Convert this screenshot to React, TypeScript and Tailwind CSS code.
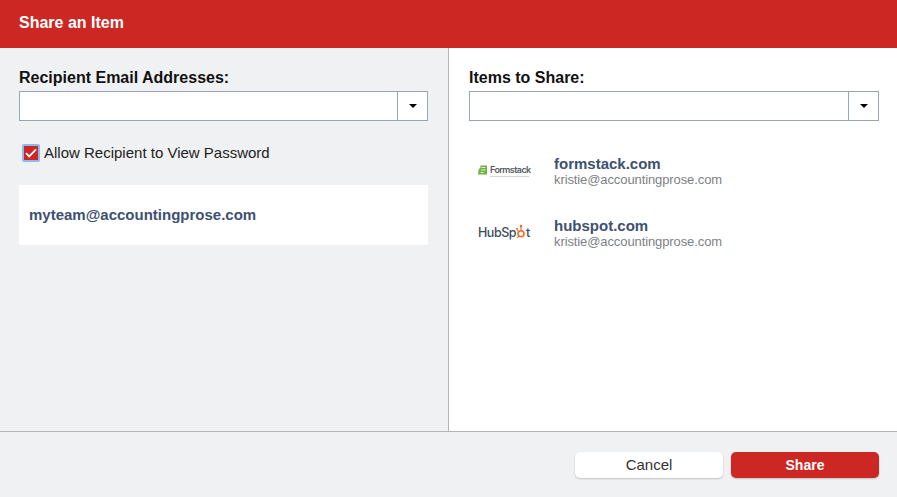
const sans = "font-['Liberation_Sans',Arial,sans-serif]";

function ComboBox() {
  return (
    <div className="flex h-[30px] border border-[#9aa5b4] bg-white">
      <div className="flex-1" />
      <div className="flex w-[30px] items-center justify-center border-l border-[#9aa5b4]">
        <span className="h-0 w-0 border-x-[4px] border-t-[4px] border-x-transparent border-t-black" />
      </div>
    </div>
  );
}

function FormstackLogo() {
  return (
    <div className="flex w-[52px] flex-col">
      <div className="flex items-center gap-[3px]">
        <svg width="9" height="10" viewBox="0 0 9 10" className="shrink-0">
          <path d="M2.6 0.4H9V9.6H0L0.8 3.4H2.2z" fill="#6cb33f" />
          <path d="M3.4 2h4v1h-4z M3 4.6h4.4v1H3z M2.6 7h3v1h-3z" fill="#e4f2d8" />
        </svg>
        <span className="font-['Inter',sans-serif] text-[9px] leading-[10px] font-semibold tracking-[-0.6px] whitespace-nowrap text-[#555b60]">
          Formstack
        </span>
      </div>
      <div className="mt-[1px] ml-[12px] h-[1px] w-[39px] bg-[#d2d5d8]" />
    </div>
  );
}

function HubSpotLogo() {
  return (
    <div className="flex w-[54px] items-center font-['Inter',sans-serif] text-[12.5px] leading-none font-medium tracking-[-0.45px] text-[#3a4c60]">
      <span>HubSp</span>
      <svg width="10" height="17" viewBox="0 0 11 17" className="mt-[-4px] shrink-0">
        <circle cx="5.5" cy="11" r="3.3" fill="none" stroke="#f0692c" strokeWidth="1.8" />
        <path d="M5.5 7.5V3.5M3 9L1.2 6.4M3 13.4L1.4 15.4" stroke="#f0692c" strokeWidth="1.3" fill="none" />
        <circle cx="5.5" cy="2.4" r="1.4" fill="#f0692c" />
        <circle cx="1.1" cy="5.6" r="1.1" fill="#f0692c" />
      </svg>
      <span>t</span>
    </div>
  );
}

const items = [
  { name: "formstack.com", email: "kristie@accountingprose.com", logo: <FormstackLogo /> },
  { name: "hubspot.com", email: "kristie@accountingprose.com", logo: <HubSpotLogo /> },
];

export default function App() {
  return (
    <div className={`flex h-[497px] w-[897px] flex-col overflow-hidden bg-[#f0f1f3] ${sans}`}>
      <header className="flex h-12 shrink-0 items-center bg-[#cc2722] px-[19px] pb-[2px] text-[16px] font-bold text-white">
        Share an Item
      </header>

      <div className="flex h-[383px] shrink-0">
        {/* Recipients */}
        <section className="w-[449px] border-r border-[#b3b5b8] pt-[21px] pr-5 pl-[19px]">
          <h2 className="mb-[5px] text-[16px] leading-[17px] font-bold text-[#111]">
            Recipient Email Addresses:
          </h2>
          <ComboBox />
          <label className="mt-[23px] flex h-[18px] items-center gap-[4px] pl-[3px] text-[15px] text-[#222]">
            <span className="flex h-[18px] w-[18px] items-center justify-center rounded-[2px] border-2 border-[#8db8f2] bg-[#cc2722]">
              <svg width="12" height="10" viewBox="0 0 12 10">
                <path d="M1 5.2L4.2 8.4L11 1.4" fill="none" stroke="#fff" strokeWidth="1.8" />
              </svg>
            </span>
            Allow Recipient to View Password
          </label>
          <div className="mt-[23px] flex h-[60px] items-center bg-white px-[10px] text-[15px] font-bold text-[#3d5170]">
            myteam@accountingprose.com
          </div>
        </section>

        {/* Items */}
        <section className="flex-1 bg-white pt-[21px] pr-[18px] pl-5">
          <h2 className="mb-[5px] text-[16px] leading-[17px] font-bold text-[#111]">
            Items to Share:
          </h2>
          <ComboBox />
          <div className="mt-[32px] flex flex-col gap-[26px]">
            {items.map((item) => (
              <div key={item.name} className="flex h-9 items-center">
                <div className="ml-[9px] w-[76px]">{item.logo}</div>
                <div>
                  <div className="text-[15px] leading-[18px] font-bold text-[#3d5170]">{item.name}</div>
                  <div className="text-[13px] leading-[14px] tracking-[-0.1px] text-[#7d8186]">{item.email}</div>
                </div>
              </div>
            ))}
          </div>
        </section>
      </div>

      <footer className="flex flex-1 items-start justify-end gap-2 border-t border-[#b3b5b8] pt-5 pr-[18px]">
        <button className="h-[26px] w-[148px] rounded-[5px] bg-white pt-px text-[15px] text-[#333] shadow-[0_1px_2px_rgba(0,0,0,0.2)]">
          Cancel
        </button>
        <button className="h-[26px] w-[148px] rounded-[5px] bg-[#cc2722] pt-px text-[14px] font-bold text-white shadow-[0_1px_2px_rgba(0,0,0,0.2)]">
          Share
        </button>
      </footer>
    </div>
  );
}
